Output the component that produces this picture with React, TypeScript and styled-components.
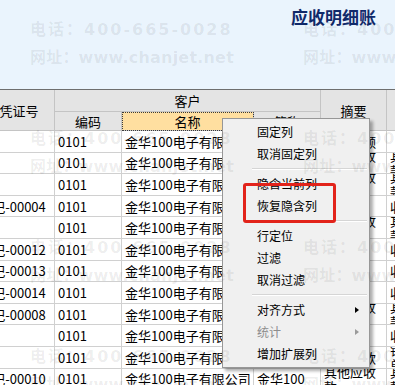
import React from "react";
import styled, { createGlobalStyle, css } from "styled-components";

const GlobalStyle = createGlobalStyle`
  html, body { margin: 0; padding: 0; background: #ffffff; }
  body { font-family: "Noto Sans CJK SC", "Liberation Sans", sans-serif; }
  *, *::before, *::after { box-sizing: border-box; }
`;

const Screen = styled.div`
  position: relative;
  width: 395px;
  height: 385px;
  overflow: hidden;
  background: #ffffff;
  color: #000000;
  font-family: "Noto Sans CJK SC", "Liberation Sans", sans-serif;
`;

const TitleBar = styled.header`
  height: 89px;
  background: #eaf4fd;
  display: flex;
  justify-content: flex-end;
  align-items: flex-start;
  padding: 8px 19px 0 0;
`;

const Title = styled.h1`
  margin: 0;
  font-size: 17px;
  line-height: 17px;
  font-weight: 700;
  color: #10296a;
`;

const GridViewport = styled.div`
  border-top: 1px solid #6e6e6e;
  height: 296px;
  overflow: hidden;
`;

const Grid = styled.div`
  display: grid;
  grid-template-columns: 71px 67px 132px 67px 66px 60px;
  grid-template-rows: 22px 19px repeat(12, 21.6px);
  margin-left: -16px;
  width: max-content;
`;

const HeadCell = styled.div<{ $row: string; $col: string; $active?: boolean }>`
  grid-row: ${(p) => p.$row};
  grid-column: ${(p) => p.$col};
  display: flex;
  align-items: center;
  justify-content: center;
  background: ${(p) => (p.$active ? "#ffdfa0" : "#e4e4e4")};
  border-right: 1px solid #c4c4c4;
  border-bottom: 1px solid #c4c4c4;
  font-size: 13px;
  line-height: 15px;
  white-space: nowrap;
  overflow: hidden;
  ${(p) =>
    p.$active &&
    css`
      outline: 1px dotted #3a3a3a;
      outline-offset: -1px;
    `}
`;

const Cell = styled.div<{ $align?: "left" | "center"; $wrap?: boolean }>`
  display: flex;
  align-items: center;
  justify-content: ${(p) => (p.$align === "center" ? "center" : "flex-start")};
  padding: 0 3px;
  border-right: 1px solid #d0d0d0;
  border-bottom: 1px solid #d0d0d0;
  font-size: 13px;
  line-height: 15px;
  white-space: ${(p) => (p.$wrap ? "normal" : "nowrap")};
  overflow: hidden;
  min-width: 0;
`;

const Menu = styled.div`
  position: absolute;
  left: 222px;
  top: 118px;
  width: 148px;
  padding: 2px;
  background: #f0f0f0;
  border: 1px solid #979797;
  box-shadow: 3px 3px 3px rgba(0, 0, 0, 0.32);
  font-size: 12px;
  line-height: 14px;
  z-index: 5;
`;

const MenuItem = styled.div<{ $disabled?: boolean }>`
  height: 22px;
  display: flex;
  align-items: center;
  justify-content: space-between;
  padding: 0 8px 0 32px;
  color: ${(p) => (p.$disabled ? "#8d8d8d" : "#000000")};
  white-space: nowrap;
`;

const SubArrow = styled.span<{ $disabled?: boolean }>`
  width: 0;
  height: 0;
  border-top: 3.5px solid transparent;
  border-bottom: 3.5px solid transparent;
  border-left: 4px solid ${(p) => (p.$disabled ? "#9a9a9a" : "#000000")};
`;

const MenuSeparator = styled.div`
  height: 8px;
  display: flex;
  align-items: center;
  margin-left: 27px;
  &::before {
    content: "";
    flex: 1;
    border-top: 1px solid #d5d5d5;
    border-bottom: 1px solid #ffffff;
  }
`;

const Annotation = styled.div`
  position: absolute;
  left: 243px;
  top: 183px;
  width: 93px;
  height: 40px;
  border: 3px solid #e2231a;
  border-radius: 3px;
  z-index: 20;
  pointer-events: none;
`;

const WatermarkLayer = styled.div`
  position: absolute;
  inset: 0;
  display: grid;
  grid-template-columns: repeat(2, 273px);
  grid-auto-rows: 109px;
  padding: 16px 0 0 30px;
  pointer-events: none;
  z-index: 10;
`;

const WatermarkTile = styled.div`
  display: flex;
  flex-direction: column;
`;

const WatermarkLine = styled.span<{ $spacing: number }>`
  font-family: "DejaVu Sans", "Noto Sans CJK SC", sans-serif;
  font-weight: 700;
  font-size: 16px;
  line-height: 28px;
  letter-spacing: ${(p) => p.$spacing}px;
  color: rgba(0, 0, 0, 0.075);
  white-space: nowrap;
`;

type Row = { voucher: string; summary: string; extra: string };

const rows: Row[] = [
  { voucher: "", summary: "期初余额", extra: "" },
  { voucher: "", summary: "其他应收款", extra: "其他应收款" },
  { voucher: "", summary: "其他应收款", extra: "其他应收款" },
  { voucher: "记-00004", summary: "收款", extra: "收款单" },
  { voucher: "", summary: "其他应收款", extra: "其他应收款" },
  { voucher: "记-00012", summary: "收款", extra: "收款单" },
  { voucher: "记-00013", summary: "收款", extra: "收款单" },
  { voucher: "记-00014", summary: "收款", extra: "收款单" },
  { voucher: "记-00008", summary: "其他应收款", extra: "其他应收款" },
  { voucher: "", summary: "收款", extra: "收款单" },
  { voucher: "", summary: "销售收款", extra: "销售收款单" },
  { voucher: "记-00010", summary: "其他应收款", extra: "其他应收款" },
];

type MenuEntry = { label: string; disabled?: boolean; sub?: boolean } | "sep";

const menu: MenuEntry[] = [
  { label: "固定列" },
  { label: "取消固定列" },
  "sep",
  { label: "隐含当前列" },
  { label: "恢复隐含列" },
  "sep",
  { label: "行定位" },
  { label: "过滤" },
  { label: "取消过滤" },
  "sep",
  { label: "对齐方式", sub: true },
  { label: "统计", sub: true, disabled: true },
  { label: "增加扩展列" },
];

export default function App() {
  return (
    <>
      <GlobalStyle />
      <Screen>
        <TitleBar>
          <Title>应收明细账</Title>
        </TitleBar>
        <GridViewport>
          <Grid>
            <HeadCell $row="1 / span 2" $col="1">凭证号</HeadCell>
            <HeadCell $row="1" $col="2 / span 3">客户</HeadCell>
            <HeadCell $row="1 / span 2" $col="5">摘要</HeadCell>
            <HeadCell $row="1 / span 2" $col="6">类型</HeadCell>
            <HeadCell $row="2" $col="2">编码</HeadCell>
            <HeadCell $row="2" $col="3" $active>名称</HeadCell>
            <HeadCell $row="2" $col="4">简称</HeadCell>
            {rows.map((r, i) => (
              <React.Fragment key={i}>
                <Cell $align="center">{r.voucher}</Cell>
                <Cell>0101</Cell>
                <Cell>金华100电子有限公司</Cell>
                <Cell>金华100</Cell>
                <Cell $wrap>{r.summary}</Cell>
                <Cell $wrap>{r.extra}</Cell>
              </React.Fragment>
            ))}
          </Grid>
        </GridViewport>

        <Menu>
          {menu.map((m, i) =>
            m === "sep" ? (
              <MenuSeparator key={i} />
            ) : (
              <MenuItem key={i} $disabled={m.disabled}>
                <span>{m.label}</span>
                {m.sub && <SubArrow $disabled={m.disabled} />}
              </MenuItem>
            )
          )}
        </Menu>

        <Annotation />

        <WatermarkLayer>
          {Array.from({ length: 8 }).map((_, i) => (
            <WatermarkTile key={i}>
              <WatermarkLine $spacing={2}>电话：400-665-0028</WatermarkLine>
              <WatermarkLine $spacing={0.2}>网址：www.chanjet.net</WatermarkLine>
            </WatermarkTile>
          ))}
        </WatermarkLayer>
      </Screen>
    </>
  );
}
